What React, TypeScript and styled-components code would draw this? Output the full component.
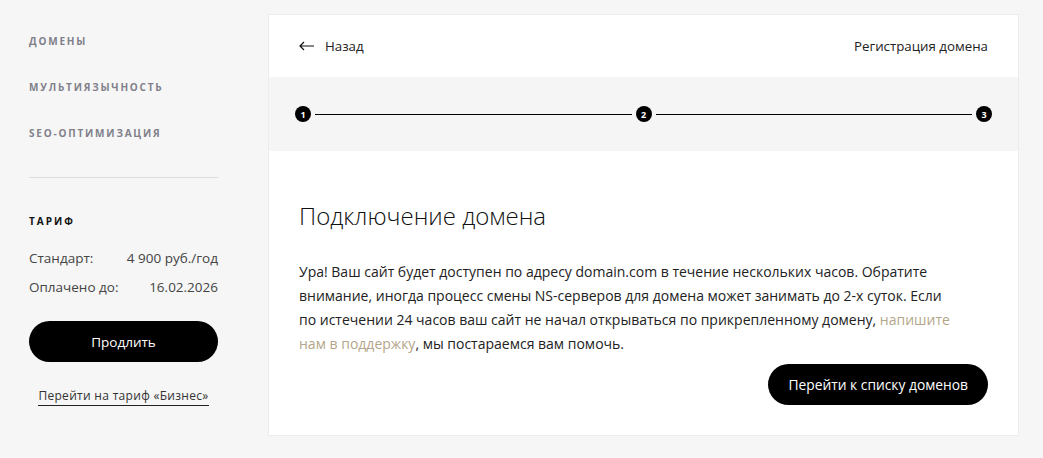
import styled, { createGlobalStyle } from 'styled-components';

const GlobalStyle = createGlobalStyle`
  html, body {
    margin: 0;
    padding: 0;
    background: #f6f6f6;
  }
  body {
    font-family: 'Open Sans', 'Noto Sans', sans-serif;
    color: #222;
  }
  * { box-sizing: border-box; }
`;

const menu = ['Домены', 'Мультиязычность', 'SEO-оптимизация'];

export default function App() {
  return (
    <>
      <GlobalStyle />
      <Page>
        <Sidebar>
          <Menu>
            {menu.map((item) => (
              <MenuItem key={item}>{item}</MenuItem>
            ))}
          </Menu>
          <Divider />
          <TariffTitle>Тариф</TariffTitle>
          <InfoRow>
            <span>Стандарт:</span>
            <span>4 900 руб./год</span>
          </InfoRow>
          <InfoRow>
            <span>Оплачено до:</span>
            <span>16.02.2026</span>
          </InfoRow>
          <SideButton>Продлить</SideButton>
          <LinkWrap>
            <UnderLink href='#'>Перейти на тариф «Бизнес»</UnderLink>
          </LinkWrap>
        </Sidebar>

        <Card>
          <Header>
            <Back href='#'>
              <svg width='16' height='10' viewBox='0 0 16 10' fill='none'>
                <path d='M15 5H1.5M5 1L1 5l4 4' stroke='#111' strokeWidth='1.2' />
              </svg>
              Назад
            </Back>
            <HeaderTitle>Регистрация домена</HeaderTitle>
          </Header>

          <Steps>
            <Step>1</Step>
            <StepLine />
            <Step>2</Step>
            <StepLine />
            <Step>3</Step>
          </Steps>

          <Content>
            <Title>Подключение домена</Title>
            <Text>
              Ура! Ваш сайт будет доступен по адресу domain.com в течение нескольких часов. Обратите
              <br />
              внимание, иногда процесс смены NS-серверов для домена может занимать до 2-х суток. Если
              <br />
              по истечении 24 часов ваш сайт не начал открываться по прикрепленному домену,{' '}
              <Accent href='#'>
                напишите
                <br />
                нам в поддержку
              </Accent>
              , мы постараемся вам помочь.
            </Text>
            <Actions>
              <PrimaryButton>Перейти к списку доменов</PrimaryButton>
            </Actions>
          </Content>
        </Card>
      </Page>
    </>
  );
}

const Page = styled.div`
  display: flex;
  align-items: flex-start;
  gap: 50px;
  padding: 14px 24px 22px 29px;
  min-height: 458px;
`;

const Sidebar = styled.aside`
  width: 189px;
  flex-shrink: 0;
  display: flex;
  flex-direction: column;
`;

const Menu = styled.nav`
  display: flex;
  flex-direction: column;
  gap: 32px;
  padding-top: 20px;
`;

const MenuItem = styled.a`
  font-size: 10px;
  line-height: 14px;
  font-weight: 700;
  letter-spacing: 1.8px;
  text-transform: uppercase;
  color: #80808a;
`;

const Divider = styled.div`
  height: 1px;
  background: #dedede;
  margin: 37px 0 36px;
`;

const TariffTitle = styled.div`
  font-size: 10px;
  line-height: 14px;
  font-weight: 700;
  letter-spacing: 2px;
  text-transform: uppercase;
  color: #111;
  margin-bottom: 16px;
`;

const InfoRow = styled.div`
  display: flex;
  justify-content: space-between;
  font-size: 13.5px;
  line-height: 29px;
  color: #444;
`;

const SideButton = styled.button`
  margin-top: 19px;
  height: 41px;
  border: none;
  border-radius: 21px;
  background: #000;
  color: #fff;
  font-family: inherit;
  font-size: 13.5px;
  cursor: pointer;
`;

const LinkWrap = styled.div`
  text-align: center;
  margin-top: 21px;
`;

const UnderLink = styled.a`
  font-size: 12px;
  letter-spacing: 0.3px;
  color: #333;
  text-decoration: none;
  border-bottom: 1px solid #222;
  padding-bottom: 1px;
`;

const Card = styled.main`
  flex: 1;
  background: #fff;
  border: 1px solid #ececec;
`;

const Header = styled.header`
  display: flex;
  justify-content: space-between;
  align-items: center;
  height: 62px;
  padding: 0 30px;
  font-size: 13.3px;
`;

const Back = styled.a`
  display: flex;
  align-items: center;
  gap: 10px;
  color: #222;
  text-decoration: none;
`;

const HeaderTitle = styled.div`
  color: #222;
`;

const Steps = styled.div`
  display: flex;
  align-items: center;
  gap: 4px;
  height: 74px;
  padding: 0 26px;
  background: #f5f5f5;
`;

const Step = styled.span`
  width: 16px;
  height: 16px;
  border-radius: 50%;
  background: #000;
  color: #fff;
  font-size: 9px;
  font-weight: 700;
  display: flex;
  align-items: center;
  justify-content: center;
  flex-shrink: 0;
`;

const StepLine = styled.span`
  flex: 1;
  height: 1px;
  background: #000;
`;

const Content = styled.section`
  padding: 49px 30px 30px;
`;

const Title = styled.h1`
  margin: 0 0 28px;
  font-size: 24px;
  font-weight: 300;
  line-height: 32px;
  color: #111;
`;

const Text = styled.p`
  margin: 0;
  font-size: 14px;
  line-height: 24px;
  color: #222;
`;

const Accent = styled.a`
  color: #b3a68a;
  text-decoration: none;
`;

const Actions = styled.div`
  display: flex;
  justify-content: flex-end;
  margin-top: 8px;
`;

const PrimaryButton = styled.button`
  height: 41px;
  padding: 0 20px;
  border: none;
  border-radius: 21px;
  background: #000;
  color: #fff;
  font-family: inherit;
  font-size: 13.8px;
  cursor: pointer;
`;
